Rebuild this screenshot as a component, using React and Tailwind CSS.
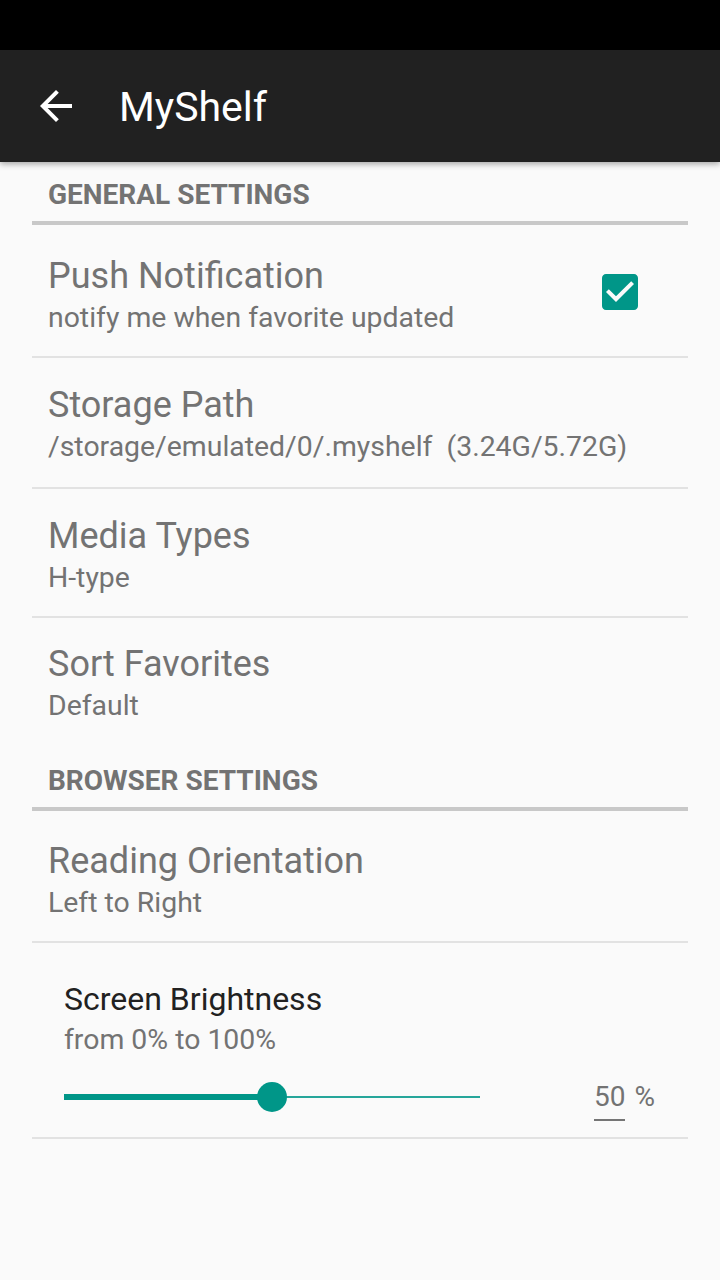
import React from "react";

function Row({ title, summary, right, h = "h-[129px]", pt = "pt-[27px]" }) {
  return (
    <>
      <div className={`${h} flex items-start pl-4`}>
        <div className={`flex-1 ${pt}`}>
          <div className="text-[36px] leading-[42px] text-[#737373]">{title}</div>
          <div className="text-[28.4px] leading-[42px] text-[#737373]">{summary}</div>
        </div>
        {right}
      </div>
      <div className="h-[2px] bg-[#e2e2e2]" />
    </>
  );
}

function Header({ children }) {
  return (
    <>
      <div className="h-[59px] pt-[18px] pl-4 text-[28px] leading-[30px] font-bold text-[#737373]">
        {children}
      </div>
      <div className="h-[4px] bg-[#c8c8c8]" />
    </>
  );
}

function CheckBox() {
  return (
    <svg width="48" height="48" viewBox="0 0 24 24" className="mt-[43px] mr-[44px]">
      <path
        fill="#009688"
        d="M19 3H5c-1.11 0-2 .9-2 2v14c0 1.1.89 2 2 2h14c1.11 0 2-.9 2-2V5c0-1.1-.89-2-2-2zm-9 14l-5-5 1.41-1.41L10 14.17l7.59-7.59L19 8l-9 9z"
      />
    </svg>
  );
}

export default function App() {
  return (
    <div
      className="min-h-screen bg-[#fafafa] flex flex-col"
      style={{ fontFamily: "Roboto, 'Noto Sans', sans-serif" }}
    >
      <div className="h-[50px] bg-black" />
      <div className="relative z-10 h-[112px] bg-[#212121] flex items-center pl-[32px] shadow-[0_2px_6px_rgba(0,0,0,0.35)]">
        <svg width="48" height="48" viewBox="0 0 24 24">
          <path fill="#ffffff" d="M20 11H7.83l5.59-5.59L12 4l-8 8 8 8 1.41-1.41L7.83 13H20v-2z" />
        </svg>
        <div className="ml-[39px] mt-[2px] text-[41px] leading-[44px] text-white">MyShelf</div>
      </div>
      <div className="px-[32px] flex flex-col">
        <Header>GENERAL SETTINGS</Header>
        <Row
          h="h-[131px]"
          pt="pt-[30px]"
          title="Push Notification"
          summary="notify me when favorite updated"
          right={<CheckBox />}
        />
        <Row
          pt="pt-[26px]"
          title="Storage Path"
          summary={"/storage/emulated/0/.myshelf\u00a0\u00a0(3.24G/5.72G)"}
        />
        <Row h="h-[127px]" pt="pt-[26px]" title="Media Types" summary="H-type" />
        <div className="h-[130px] pl-4 pt-[25px]">
          <div className="text-[36px] leading-[42px] text-[#737373]">Sort Favorites</div>
          <div className="text-[28.4px] leading-[42px] text-[#737373]">Default</div>
        </div>
        <Header>BROWSER SETTINGS</Header>
        <Row h="h-[130px]" pt="pt-[29px]" title="Reading Orientation" summary="Left to Right" />
        <div className="pl-[32px] pr-[33px] pt-[37px] pb-[16px]">
          <div className="text-[32px] leading-[38px] text-[#212121]">Screen Brightness</div>
          <div className="mt-[3px] text-[28.4px] leading-[38px] text-[#737373]">from 0% to 100%</div>
          <div className="mt-[14px] h-[48px] flex items-start">
            <div className="relative w-[416px] h-[30px] mt-[9px]">
              <div className="absolute left-0 right-0 top-[14px] h-[2px] bg-[#26a69a]" />
              <div className="absolute left-0 w-[208px] top-[12px] h-[6px] bg-[#009688]" />
              <div className="absolute left-[193px] top-0 w-[30px] h-[30px] rounded-full bg-[#009688]" />
            </div>
            <div className="ml-auto mt-[10px] flex items-start text-[28px] leading-[28px] text-[#737373]">
              <span className="pb-[8px] border-b-2 border-[#757575]">50</span>
              <span className="ml-[9px]">%</span>
            </div>
          </div>
        </div>
        <div className="h-[2px] bg-[#e2e2e2]" />
      </div>
    </div>
  );
}
